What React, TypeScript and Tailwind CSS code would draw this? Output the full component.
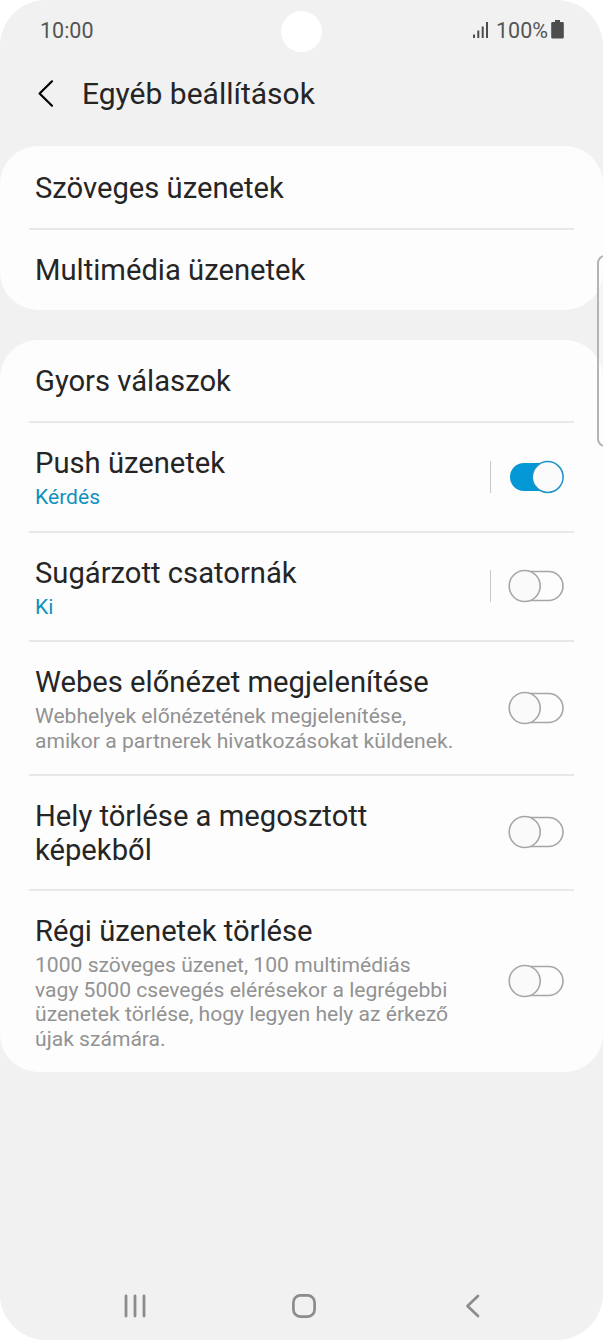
import { useState } from "react"
import clsx from "clsx"

interface Setting {
  id: string
  title: string
  status?: string
  description?: string
  switchable?: boolean
  split?: boolean
  height: string
}

const messageTypes: Setting[] = [
  { id: "sms", title: "Szöveges üzenetek", height: "h-[84px] pt-[25px]" },
  { id: "mms", title: "Multimédia üzenetek", height: "h-[80px] pt-[23px]" },
]

const options: Setting[] = [
  { id: "quick", title: "Gyors válaszok", height: "h-[83px] pt-[24px]" },
  { id: "push", title: "Push üzenetek", status: "Kérdés", switchable: true, split: true, height: "h-[110px] pt-[23px]" },
  { id: "broadcast", title: "Sugárzott csatornák", status: "Ki", switchable: true, split: true, height: "h-[109px] pt-[23px]" },
  {
    id: "preview",
    title: "Webes előnézet megjelenítése",
    description: "Webhelyek előnézetének megjelenítése, amikor a partnerek hivatkozásokat küldenek.",
    switchable: true,
    height: "h-[134px] pt-[23px]",
  },
  { id: "location", title: "Hely törlése a megosztott képekből", switchable: true, height: "h-[115px] pt-[23px]" },
  {
    id: "cleanup",
    title: "Régi üzenetek törlése",
    description:
      "1000 szöveges üzenet, 100 multimédiás vagy 5000 csevegés elérésekor a legrégebbi üzenetek törlése, hogy legyen hely az érkező újak számára.",
    switchable: true,
    height: "h-[181px] pt-[23px]",
  },
]

function Toggle({ on, label, onClick }: { on: boolean; label: string; onClick: () => void }) {
  return (
    <button role="switch" aria-checked={on} aria-label={label} onClick={onClick} className="shrink-0">
      <svg width="56" height="34" viewBox="0 0 56 34" fill="none" className="block">
        {on ? (
          <>
            <rect x="2" y="3" width="50" height="28" rx="14" fill="#0397d6" />
            <circle cx="39.7" cy="17" r="15.4" fill="#fbfbfb" stroke="#1d93c9" strokeWidth="1.5" />
          </>
        ) : (
          <>
            <rect x="4" y="2.5" width="51" height="29" rx="14.5" stroke="#a6a6a6" strokeWidth="1.6" />
            <circle cx="16.7" cy="17" r="15.5" fill="#fafafa" stroke="#a6a6a6" strokeWidth="1.6" />
          </>
        )}
      </svg>
    </button>
  )
}

function Card({ items, enabled, onToggle }: { items: Setting[]; enabled: string[]; onToggle: (id: string) => void }) {
  return (
    <section className="rounded-[38px] bg-[#fdfdfd]">
      {items.map((item, i) => (
        <div
          key={item.id}
          className={clsx(
            "mx-[29px] flex justify-between pr-[10px] pl-[6px]",
            item.height,
            i < items.length - 1 && "border-b-2 border-[#e8e8e8]"
          )}
        >
          <div className="w-[424px]">
            <h2
              className={clsx(
                "text-[29.2px] leading-[34px] text-[#252525]",
                item.id === "location" && "w-[360px]"
              )}
            >
              {item.title}
            </h2>
            {item.status && <p className="mt-[5px] text-[21.1px] leading-[24.5px] text-[#0f92be]">{item.status}</p>}
            {item.description && (
              <p className="mt-[5px] text-[21.1px] leading-[24.5px] text-[#929292]">{item.description}</p>
            )}
          </div>
          {item.switchable && (
            <div className="mt-[-24px] flex items-center gap-[17px]">
              {item.split && <span className="h-8 w-[1.5px] bg-[#c8c8c8]" />}
              <Toggle on={enabled.includes(item.id)} label={item.title} onClick={() => onToggle(item.id)} />
            </div>
          )}
        </div>
      ))}
    </section>
  )
}

export default function App() {
  const [enabled, setEnabled] = useState(["push"])

  const toggle = (id: string) => {
    setEnabled(enabled.includes(id) ? enabled.filter((e) => e !== id) : [...enabled, id])
  }

  return (
    <div className="h-[1340px] w-[603px] bg-white">
      <div className="relative flex h-full flex-col overflow-hidden rounded-[46px] bg-[#f1f1f1] font-['Roboto',sans-serif]">
        {/* Status bar */}
        <div className="grid h-[62px] grid-cols-3 items-center pr-[39px] pl-10 text-[21.5px] text-[#555]">
          <span>10:00</span>
          <span className="size-[41px] justify-self-center rounded-full bg-white" />
          <div className="flex items-center justify-end">
            <svg width="17" height="18" viewBox="0 0 17 18" className="mr-[7px] mb-[2px]" stroke="#4d4d4d" strokeWidth="2">
              <path d="M2 13.5V17M6.3 9.5V17M10.7 5.5V17M15 1V17" />
            </svg>
            <span>100%</span>
            <svg width="13" height="19" viewBox="0 0 13 19" className="mb-[3px] ml-[3px]" fill="#4d4d4d">
              <path d="M4 0h5v2h2.5a1.3 1.3 0 0 1 1.3 1.3v13.9a1.3 1.3 0 0 1-1.3 1.3h-10a1.3 1.3 0 0 1-1.3-1.3V3.300a1.300 1.300 0 0 1 1.300-1.300H4z" />
            </svg>
          </div>
        </div>

        {/* Header */}
        <header className="flex h-[84px] items-start gap-[28px] pt-[15px] pl-[37px]">
          <button aria-label="Vissza" className="pt-[2px]">
            <svg width="17" height="29" viewBox="0 0 17 29" fill="none" stroke="#000" strokeWidth="2.2" strokeLinecap="round" strokeLinejoin="round">
              <path d="M15 2.300 2.600 14.500 15 26.700" />
            </svg>
          </button>
          <h1 className="text-[30px] leading-[34px] text-[#252525]">Egyéb beállítások</h1>
        </header>

        <main className="flex flex-1 flex-col gap-[30px]">
          <Card items={messageTypes} enabled={enabled} onToggle={toggle} />
          <Card items={options} enabled={enabled} onToggle={toggle} />
        </main>

        {/* Navigation bar */}
        <nav className="flex h-[68px] items-center justify-between px-[122px] text-[#8c8c8c]">
          <svg width="26" height="26" viewBox="0 0 26 26" stroke="currentColor" strokeWidth="2.8" strokeLinecap="round">
            <path d="M4 3v20M13 3v20M22 3v20" />
          </svg>
          <svg width="26" height="26" viewBox="0 0 26 26" fill="none" stroke="currentColor" strokeWidth="2.700" className="ml-[4px]">
            <rect x="2.400" y="2.400" width="21.200" height="21.200" rx="7" />
          </svg>
          <svg width="26" height="26" viewBox="0 0 26 26" fill="none" stroke="currentColor" strokeWidth="2.700" strokeLinecap="round" strokeLinejoin="round">
            <path d="M23 3 12.500 13 23 23" />
          </svg>
        </nav>

        {/* Edge panel handle */}
        <div className="absolute top-[255px] -right-4 h-[192px] w-[22px] rounded-[8px] border-2 border-[#b4b4b4] bg-white/30" />
      </div>
    </div>
  )
}
